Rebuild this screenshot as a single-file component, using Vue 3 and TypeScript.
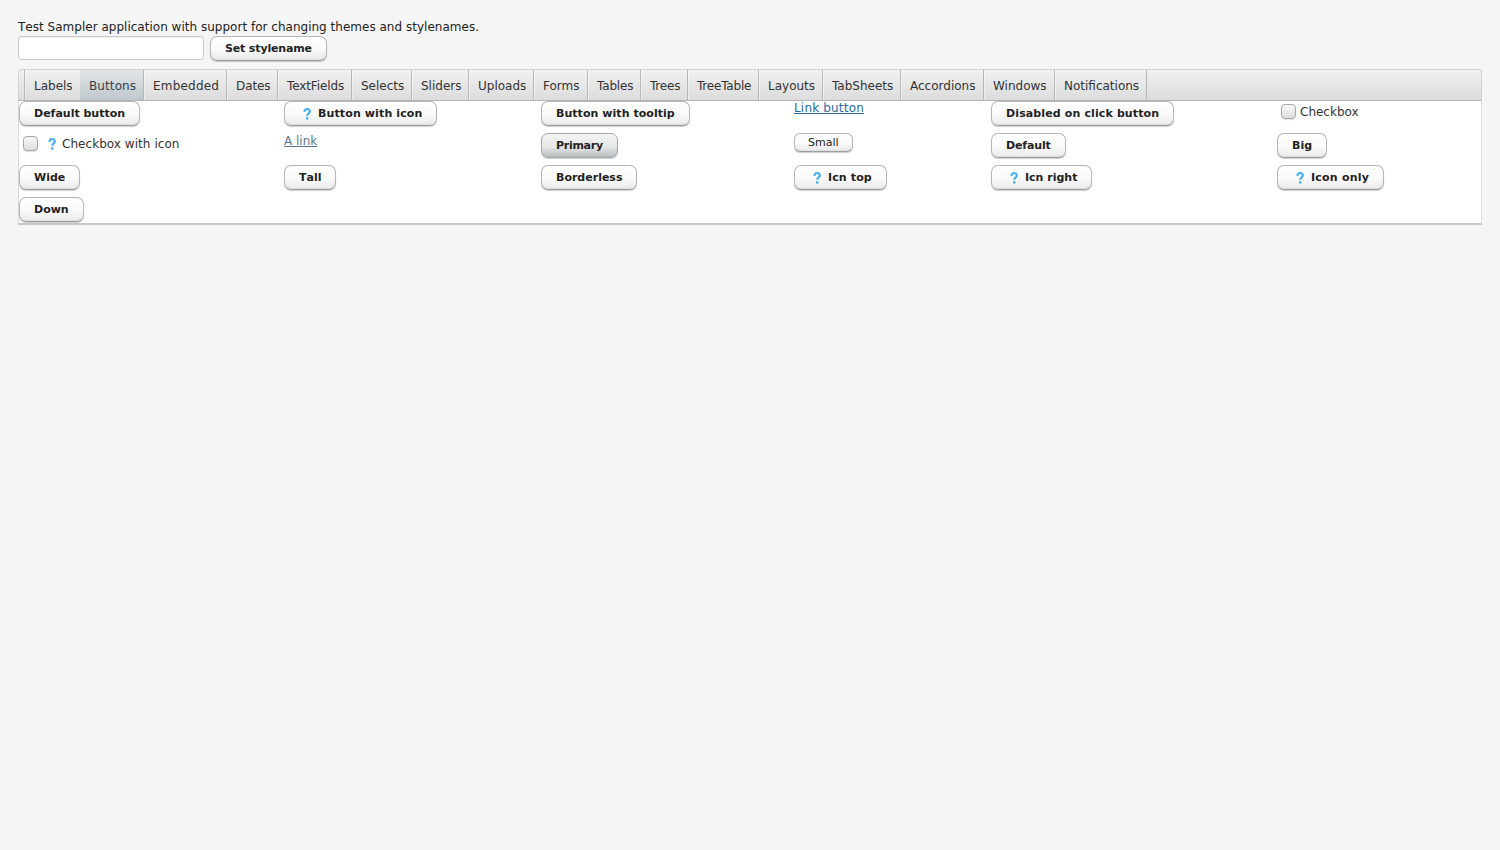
<script setup lang="ts">
interface Tab { label: string; width: number; track?: number }
const tabs: Tab[] = [
  { label: 'Labels', width: 56 }, { label: 'Buttons', width: 63, track: 0.1 }, { label: 'Embedded', width: 83, track: 0.2 },
  { label: 'Dates', width: 51, track: -0.1 }, { label: 'TextFields', width: 74, track: -0.1 }, { label: 'Selects', width: 60 },
  { label: 'Sliders', width: 57 }, { label: 'Uploads', width: 65 }, { label: 'Forms', width: 54 },
  { label: 'Tables', width: 53, track: -0.15 }, { label: 'Trees', width: 47, track: -0.2 }, { label: 'TreeTable', width: 71, track: -0.2 },
  { label: 'Layouts', width: 64 }, { label: 'TabSheets', width: 78 }, { label: 'Accordions', width: 83 },
  { label: 'Windows', width: 71 }, { label: 'Notifications', width: 92 }
]
const helpPath = 'M5.4 5.8C5.6 4 6.7 3 8.1 3c1.6 0 2.7 1 2.7 2.4 0 2-2.6 2.2-2.6 4.4'
const tabStyle = (t: Tab) => ({ width: t.width + 'px', letterSpacing: (t.track ?? 0) + 'px' })
</script>

<template>
  <div class="page">
    <div class="intro">Test Sampler application with support for changing themes and stylenames.</div>
    <div class="form-row">
      <input class="field" type="text" aria-label="Stylename" />
      <button class="btn tight-2">Set stylename</button>
    </div>
    <section class="sheet">
      <nav class="tabbar">
        <div v-for="t in tabs" :key="t.label" class="tab" :class="{ active: t.label === 'Buttons' }" :style="tabStyle(t)">{{ t.label }}</div>
      </nav>
      <div class="content">
        <div class="cell"><button class="btn">Default button</button></div>
        <div class="cell"><button class="btn wide-1"><svg class="ico" viewBox="0 0 16 16"><path :d="helpPath" /><rect x="7" y="11.2" width="2.4" height="2.4" /></svg>Button with icon</button></div>
        <div class="cell"><button class="btn wide-0">Button with tooltip</button></div>
        <div class="cell"><a class="link-btn">Link button</a></div>
        <div class="cell"><button class="btn wide-1">Disabled on click button</button></div>
        <div class="cell"><label class="check"><span class="box"></span>Checkbox</label></div>

        <div class="cell"><label class="check check-icon"><span class="box"></span><svg class="ico" viewBox="0 0 16 16"><path :d="helpPath" /><rect x="7" y="11.2" width="2.4" height="2.4" /></svg>Checkbox with icon</label></div>
        <div class="cell"><a class="plain-link">A link</a></div>
        <div class="cell"><button class="btn primary tight-3">Primary</button></div>
        <div class="cell"><button class="btn small">Small</button></div>
        <div class="cell"><button class="btn tight-1">Default</button></div>
        <div class="cell"><button class="btn">Big</button></div>

        <div class="cell"><button class="btn">Wide</button></div>
        <div class="cell"><button class="btn">Tall</button></div>
        <div class="cell"><button class="btn">Borderless</button></div>
        <div class="cell"><button class="btn wide-1"><svg class="ico" viewBox="0 0 16 16"><path :d="helpPath" /><rect x="7" y="11.2" width="2.4" height="2.4" /></svg>Icn top</button></div>
        <div class="cell"><button class="btn"><svg class="ico" viewBox="0 0 16 16"><path :d="helpPath" /><rect x="7" y="11.2" width="2.4" height="2.4" /></svg>Icn right</button></div>
        <div class="cell"><button class="btn wide-2"><svg class="ico" viewBox="0 0 16 16"><path :d="helpPath" /><rect x="7" y="11.2" width="2.4" height="2.4" /></svg>Icon only</button></div>

        <div class="cell"><button class="btn">Down</button></div>
      </div>
    </section>
  </div>
</template>

<style>
html, body { margin: 0; background: #f5f5f5; }
</style>

<style scoped>
.page {
  box-sizing: border-box;
  width: 1500px;
  height: 850px;
  padding: 18px 18px 0;
  font: 12px/18px "DejaVu Sans", sans-serif;
  color: #222;
  background: #f5f5f5;
}
.intro { height: 18px; font-kerning: none; letter-spacing: .014px; }
.form-row { display: flex; gap: 6px; height: 25px; margin-bottom: 8px; }
.field {
  box-sizing: border-box;
  width: 186px;
  height: 24px;
  margin: 0;
  padding: 0 4px;
  background: #fff;
  border: 1px solid #c7cbcc;
  border-radius: 3px;
  box-shadow: inset 0 1px 1px #eee;
}
.btn {
  display: inline-flex;
  align-items: center;
  justify-content: center;
  box-sizing: border-box;
  height: 25px;
  margin: 0;
  padding: 0 14px;
  font: bold 11px/14px "DejaVu Sans", sans-serif;
  font-kerning: none;
  color: #222;
  white-space: nowrap;
  background: linear-gradient(#fff 0, #fafafa 55%, #e9e9e9 100%);
  border: 1px solid #b4b8b9;
  border-bottom-color: #9a9e9f;
  border-radius: 7px;
  box-shadow: 0 1px 1px rgba(0, 0, 0, .2), inset 0 -1px 1px rgba(0, 0, 0, .05);
}
.tight-1 { letter-spacing: -.14px; }
.tight-2 { letter-spacing: -.15px; }
.tight-3 { letter-spacing: -.28px; }
.wide-0 { letter-spacing: .05px; }
.wide-1 { letter-spacing: .125px; }
.wide-2 { letter-spacing: .22px; }
.btn.primary {
  background: linear-gradient(#f4f4f4 0, #e6e7e7 55%, #b9bdbf 100%);
  border-color: #a6aaab;
}
.btn.small {
  height: 19px;
  padding: 0 13px;
  font-weight: 400;
  border-radius: 6px;
}
.ico {
  flex: none;
  width: 16px;
  height: 16px;
  margin-right: 3px;
}
.ico path { fill: none; stroke: #45b0f0; stroke-width: 2.2; }
.ico rect { fill: #45b0f0; }
.sheet {
  box-sizing: border-box;
  width: 1464px;
  height: 156px;
  background: #fff;
  border: 1px solid #dcdcdc;
  border-top: 0;
  border-bottom: 2px solid #c8c8c8;
  border-radius: 4px 4px 0 0;
}
.tabbar {
  display: flex;
  box-sizing: border-box;
  height: 32px;
  margin: 0 -1px;
  padding-left: 5px;
  background: linear-gradient(#f1f1f1, #dcdcdc);
  border: 1px solid #d3d3d3;
  border-bottom-color: #b4b4b4;
  border-radius: 4px 4px 0 0;
}
.tab {
  box-sizing: border-box;
  padding: 8px 0 0 9px;
  color: #333;
  border-right: 1px solid #b6b8b8;
  line-height: 17px;
  white-space: nowrap;
  box-shadow: inset 1px 0 0 rgba(255, 255, 255, .45);
}
.tab:first-child { width: 57px !important; border-left: 1px solid #b6b8b8; }
.tab.active {
  margin-left: -1px;
  width: 64px !important;
  color: #37424a;
  background: linear-gradient(#e2e5e6, #bfc8cd);
  box-shadow: none;
}
.content {
  display: grid;
  grid-template-columns: 265px 257px 253px 197px 286px 1fr;
  grid-auto-rows: 32px;
}
.cell { display: flex; align-items: flex-start; min-width: 0; }
.check {
  display: inline-flex;
  align-items: center;
  gap: 4px;
  height: 18px;
  margin: 2px 0 0 4px;
  color: #333;
}
.check-icon { margin-top: 2px; letter-spacing: .05px; }
.check-icon .box { margin-right: 2px; }
.check-icon .ico { margin: 0 -2px 0 0; }
.box {
  box-sizing: border-box;
  width: 15px;
  height: 15px;
  margin-top: -2px;
  background: linear-gradient(#f7f7f7, #dedede);
  border: 1px solid #a3a7a8;
  border-radius: 4px;
  box-shadow: 0 1px 1px rgba(0, 0, 0, .12);
}
.link-btn { color: #286c9e; text-decoration: underline; line-height: 14px; display: block; letter-spacing: .18px; }
.plain-link { color: #5c7a94; text-decoration: underline; display: block; margin-top: -1px; }
</style>
